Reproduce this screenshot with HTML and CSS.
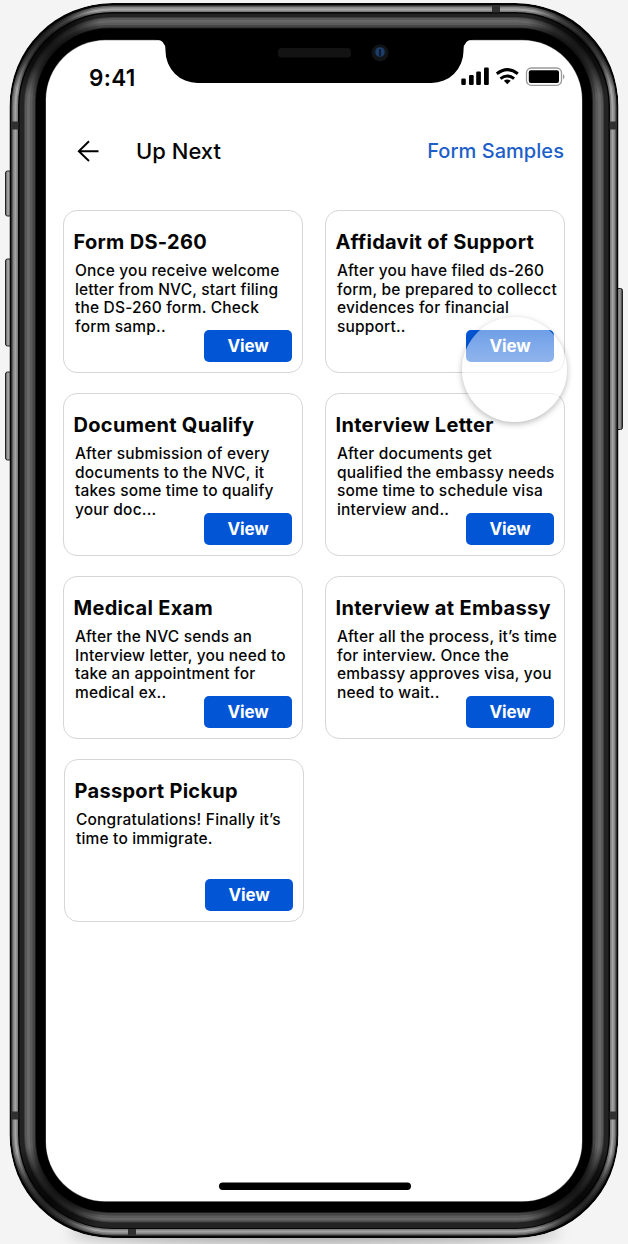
FILE: index.html
```html
<!DOCTYPE html>
<html lang="en">
<head>
<meta charset="utf-8">
<title>Up Next</title>
<link rel="stylesheet" href="styles.css">
</head>
<body>
<div class="stage">
  <svg class="device" width="628" height="1244" viewBox="0 0 628 1244" aria-hidden="true">
    <defs>
      <linearGradient id="key" x1="0" x2="1" y1="0" y2="0">
        <stop offset="0" stop-color="#555"/><stop offset=".35" stop-color="#aaa"/><stop offset=".7" stop-color="#858585"/><stop offset="1" stop-color="#222"/>
      </linearGradient>
      <radialGradient id="dim">
        <stop offset="0" stop-color="#000" stop-opacity=".8"/><stop offset=".5" stop-color="#000" stop-opacity=".6"/><stop offset="1" stop-color="#000" stop-opacity="0"/>
      </radialGradient>
      <filter id="soft" x="-20%" y="-200%" width="140%" height="500%"><feGaussianBlur stdDeviation="8"/></filter>
      <clipPath id="body"><rect x="9.5" y="3" width="609" height="1235" rx="103"/></clipPath>
    </defs>
    <ellipse cx="314" cy="1232" rx="245" ry="11" fill="#000" opacity=".35" filter="url(#soft)"/>
    <g fill="url(#key)" stroke="#222" stroke-width="1">
      <rect x="5.5" y="171" width="7" height="45" rx="2"/>
      <rect x="5.5" y="259" width="7" height="87" rx="2"/>
      <rect x="5.5" y="372" width="7" height="88" rx="2"/>
      <rect x="616" y="288.500" width="6.500" height="141" rx="2"/>
    </g>
    <g clip-path="url(#body)">
      <rect x="9.500" y="3" width="609" height="1235" rx="103" fill="#050505"/>
      <rect x="11.500" y="5.500" width="605" height="1230" rx="101" fill="#5d5d5d"/>
      <rect x="13" y="7" width="602" height="1227" rx="99.500" fill="#858585"/>
      <rect x="14.500" y="8.500" width="599" height="1224" rx="98" fill="#a4a4a4"/>
      <rect x="16.500" y="10.500" width="595" height="1220" rx="96" fill="#7c7c7c"/>
      <rect x="18" y="12" width="592" height="1217" rx="94.500" fill="#050505"/>
      <rect x="19.500" y="13.500" width="589" height="1214.500" rx="93" fill="#232323"/>
      <rect x="24" y="17" width="580" height="1205.500" rx="88" fill="#3f3f3f"/>
      <rect x="25" y="18" width="578" height="1203.500" rx="87" fill="#595959"/>
      <rect x="27" y="20" width="574" height="1200" rx="85" fill="#676767"/>
      <rect x="30" y="22.500" width="568" height="1195.500" rx="81" fill="#5b5b5b"/>
      <rect x="32.500" y="25" width="563" height="1190.500" rx="77" fill="#454545"/>
      <rect x="35" y="27.500" width="558" height="1185.500" rx="74" fill="#1c1c1c"/>
      <rect x="36" y="28.500" width="556" height="1183.500" rx="72" fill="#000"/>
      <g fill="url(#dim)">
        <circle cx="48" cy="42" r="56"/><circle cx="580" cy="42" r="56"/>
        <circle cx="48" cy="1199" r="56"/><circle cx="580" cy="1199" r="56"/>
      </g>
      <g fill="#303030">
        <rect x="11.500" y="121.500" width="7" height="8"/><rect x="609.500" y="121.500" width="7" height="8"/>
        <rect x="11.500" y="1111.500" width="7" height="8"/><rect x="609.500" y="1111.500" width="7" height="8"/>
        <rect x="492" y="5.500" width="8" height="7"/><rect x="128" y="1229" width="8" height="6.500"/>
      </g>
    </g>
    <rect x="45.500" y="39.700" width="537" height="1162" rx="60" fill="#555"/>
    <rect x="46" y="40.200" width="536" height="1161" rx="59.500" fill="#fff"/>
    <path d="M156 39.500Q165.500 40 165.500 50V51A32 32 0 0 0 197.500 83H431.500A32 32 0 0 0 463.500 51V50Q463.500 40 473 39.500V36H156Z" fill="#000"/>
    <rect x="278" y="48" width="73" height="9.500" rx="3.500" fill="#131313"/>
    <circle cx="380" cy="53" r="8.500" fill="#111417"/>
    <circle cx="380" cy="52" r="4.800" fill="#1c3d68"/>
    <path d="M380 49V56" stroke="#0b1524" stroke-width="1.600"/>
    <rect x="219" y="1182.500" width="192" height="7.500" rx="3.700" fill="#000"/>
  </svg>
  <main class="screen">
    <div class="status">
      <span class="time">9:41</span>
      <svg class="signals" width="106" height="20" viewBox="0 0 106 20" aria-hidden="true">
        <g fill="#000">
          <rect x="1.300" y="11.500" width="4.500" height="6.500" rx="1.200"/><rect x="9" y="8" width="4.700" height="10" rx="1.200"/>
          <rect x="16.200" y="4.500" width="4.700" height="13.500" rx="1.200"/><rect x="24" y="0.500" width="4.800" height="17.500" rx="1.200"/>
          <path d="M47.300 17.200L43.900 13.800Q47.300 11 50.700 13.800Z"/>
        </g>
        <path d="M40.500 11.600Q47.300 6.300 54.100 11.600M36.800 6.800Q47.300-1.500 57.800 6.800" fill="none" stroke="#000" stroke-width="3"/>
        <rect x="66.500" y="1" width="35" height="17.300" rx="4.800" fill="none" stroke="#999" stroke-width="1.300"/>
        <rect x="68.800" y="3.300" width="30.200" height="12.800" rx="2" fill="#000"/>
        <path d="M103 7Q106 9.700 103 12.400Z" fill="#999"/>
      </svg>
    </div>
    <header class="header">
      <svg class="back" width="22" height="22" viewBox="0 0 22 22" fill="none" stroke="#000" stroke-width="1.900" aria-label="Back"><path d="M21.500 11.300H1.500M12 1.300L1.800 11.300L12 21"/></svg>
      <h1 class="heading">Up Next</h1>
      <a class="samples">Form Samples</a>
    </header>
    <section class="grid">
      <article class="card"><h2>Form DS-260</h2><p>Once you receive welcome<br>letter from NVC, start filing<br>the DS-260 form. Check<br>form samp..</p><button>View</button></article>
      <article class="card"><h2>Affidavit of Support</h2><p>After you have filed ds-260<br>form, be prepared to collecct<br>evidences for financial<br>support..</p><button>View</button><span class="touch"></span></article>
      <article class="card"><h2>Document Qualify</h2><p>After submission of every<br>documents to the NVC, it<br>takes some time to qualify<br>your doc...</p><button>View</button></article>
      <article class="card"><h2>Interview Letter</h2><p>After documents get<br>qualified the embassy needs<br>some time to schedule visa<br>interview and..</p><button>View</button></article>
      <article class="card"><h2>Medical Exam</h2><p>After the NVC sends an<br>Interview letter, you need to<br>take an appointment for<br>medical ex..</p><button>View</button></article>
      <article class="card"><h2>Interview at Embassy</h2><p>After all the process, it’s time<br>for interview. Once the<br>embassy approves visa, you<br>need to wait..</p><button>View</button></article>
      <article class="card card-last"><h2>Passport Pickup</h2><p>Congratulations! Finally it’s<br>time to immigrate.</p><button>View</button></article>
    </section>
  </main>
</div>
</body>
</html>
```
FILE: styles.css
```css
* { box-sizing: border-box; }
body { margin: 0; background: #f4f4f4; font-family: Inter, "Liberation Sans", sans-serif; color: #050505; }
.stage { position: relative; width: 628px; height: 1244px; overflow: hidden; }
.device { position: absolute; inset: 0; }
.screen { position: relative; padding: 64px 63px 0; }
.status { display: flex; justify-content: space-between; height: 28px; padding-left: 26px; margin-right: -1px; }
.time { font-size: 22.5px; line-height: 28px; font-weight: 600; letter-spacing: .3px; }
.signals { margin-top: 3px; }
.header { display: flex; align-items: center; height: 30px; margin-top: 44px; padding-left: 14px; margin-right: 1px; }
.back { margin-top: 0; }
.heading { margin: 0 0 0 37px; font-size: 22px; font-weight: 500; line-height: 30px; letter-spacing: 0; }
.samples { margin-left: auto; font-size: 20px; font-weight: 500; line-height: 28px; letter-spacing: .05px; color: #1d5fc9; }
.grid { display: grid; grid-template-columns: 240px 240px; column-gap: 22px; grid-auto-rows: 163px; row-gap: 20px; margin-top: 44px; }
.card { position: relative; display: flex; flex-direction: column; padding: 18px 10px 10px 9.500px; border: 1.5px solid #d6d6d6; border-radius: 14px; background: #fff; }
.card-last { margin-left: 1px; margin-right: -1px; }
.card h2 { margin: 0; font-size: 20px; line-height: 26px; font-weight: 700; letter-spacing: .3px; white-space: nowrap; }
.card p { height: 56px; margin: 7px 0 0 1.500px; font-size: 15.500px; line-height: 18.670px; font-weight: 500; letter-spacing: .18px; white-space: nowrap; }
.card button { align-self: flex-end; width: 88px; height: 32px; margin-top: auto; padding: 0; border: 0; border-radius: 5px; background: #0256d6; color: #fff; font: 700 17px/32px Inter, sans-serif; letter-spacing: -.1px; flex: none; }
.touch { position: absolute; z-index: 2; left: 135.500px; top: 105.500px; width: 105px; height: 105px; border-radius: 50%; background: linear-gradient(rgba(255,255,255,.38), rgba(255,255,255,.55) 40%); box-shadow: 0 2px 6px rgba(0,0,0,.28); }
```
